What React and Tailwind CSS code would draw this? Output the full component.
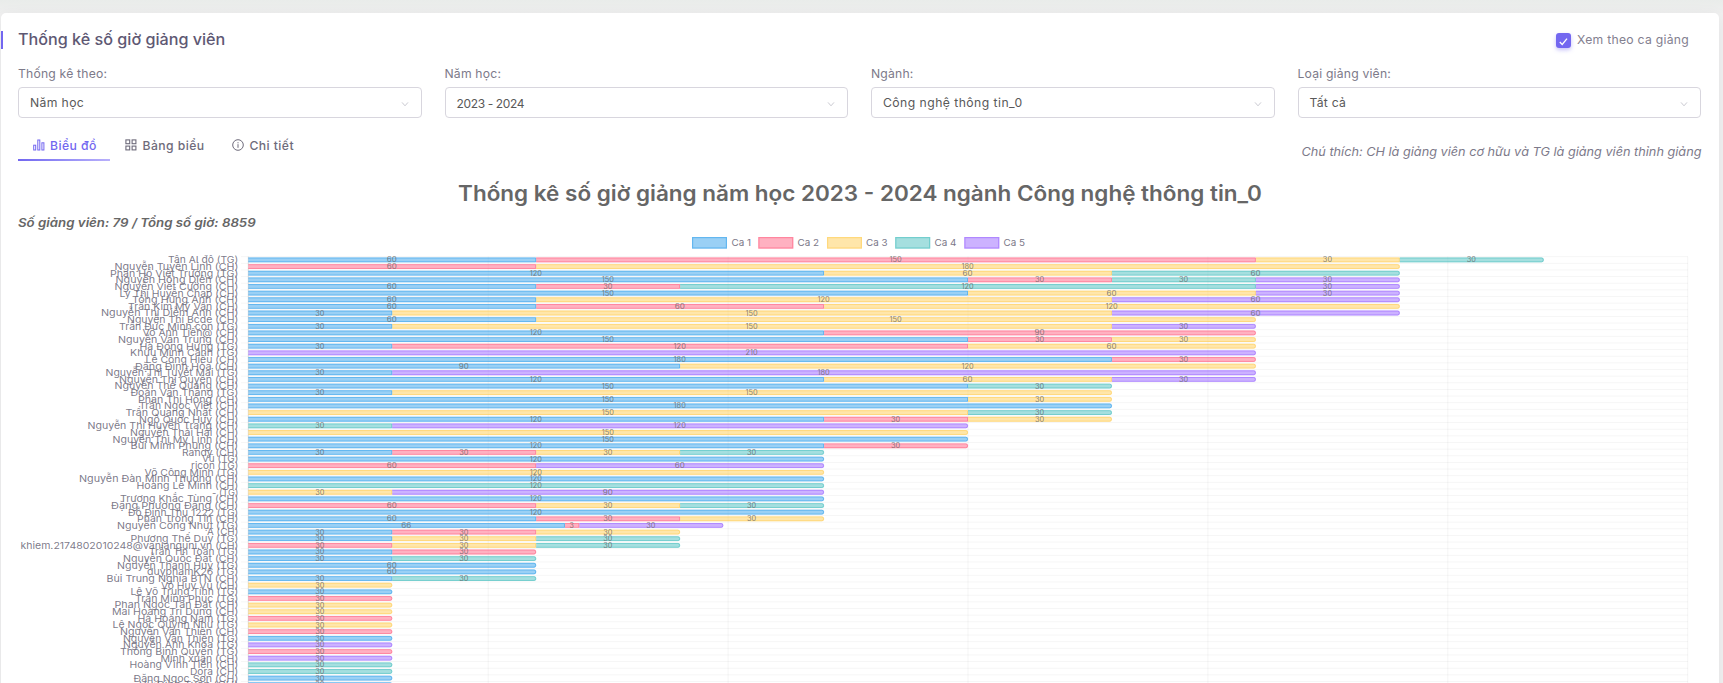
import React from "react";

const SHIFTS = [
  { name: "Ca 1", color: "#36a2eb", x: 692, textX: 731.5, textW: 19.5 },
  { name: "Ca 2", color: "#ff6384", x: 758.3, textX: 797.5, textW: 21.5 },
  { name: "Ca 3", color: "#ffcd56", x: 827, textX: 866, textW: 21.5 },
  { name: "Ca 4", color: "#4bc0c0", x: 895.2, textX: 934.5, textW: 22 },
  { name: "Ca 5", color: "#9966ff", x: 964.3, textX: 1003.5, textW: 21.5 },
];

// [lecturer, left edge of the tick label, [[shift, hours], ...]]
const ROWS = [
  ["Tân AI đô (TG)", 168, [[1, 60], [2, 150], [3, 30], [4, 30]]],
  ["Nguyễn Tuyên Linh (CH)", 114.5, [[2, 60], [3, 180]]],
  ["Phan Hồ Viết Trường (TG)", 110, [[1, 120], [3, 60], [4, 60]]],
  ["Nguyễn Hồng Diên (CH)", 115.5, [[1, 150], [2, 30], [4, 30], [5, 30]]],
  ["Nguyễn Viết Cường (CH)", 114.5, [[1, 60], [2, 30], [4, 120], [5, 30]]],
  ["Lý Thị Huyền Chap (CH)", 119.5, [[1, 150], [3, 60], [5, 30]]],
  ["Tống Hùng Anh (CH)", 132, [[1, 60], [3, 120], [5, 60]]],
  ["Trần Kim Mỹ Vân (CH)", 128, [[1, 60], [2, 60], [3, 120]]],
  ["Nguyễn Thị Diễm Anh (CH)", 101, [[1, 30], [3, 150], [5, 60]]],
  ["Nguyễn Thị Bcde (CH)", 127, [[1, 60], [3, 150]]],
  ["Trần Đức Minh con (TG)", 119, [[1, 30], [3, 150], [5, 30]]],
  ["Võ Anh Tiến@ (CH)", 142.5, [[1, 120], [2, 90]]],
  ["Nguyễn Văn Trung (CH)", 118, [[1, 150], [2, 30], [3, 30]]],
  ["Hà Đông Hưng (TG)", 139.5, [[1, 30], [2, 120], [3, 60]]],
  ["Khưu Minh Cảnh (TG)", 130, [[5, 210]]],
  ["Lê Công Hiếu (CH)", 145.5, [[1, 180], [2, 30]]],
  ["Đặng Đình Hòa (CH)", 135, [[1, 90], [3, 120]]],
  ["Nguyễn Thị Tuyết Mai (TG)", 105.5, [[1, 30], [5, 180]]],
  ["Nguyễn Thị Quyên (CH)", 119, [[1, 120], [3, 60], [5, 30]]],
  ["Nguyễn Thế Quang (CH)", 114.5, [[1, 150], [4, 30]]],
  ["Đoàn Văn Thắng (TG)", 130.5, [[1, 30], [3, 150]]],
  ["Phan Thị Hồng (CH)", 138, [[1, 150], [3, 30]]],
  ["Trần Ngọc Việt (CH)", 139, [[1, 180]]],
  ["Trần Quang Nhật (CH)", 125.5, [[3, 150], [4, 30]]],
  ["Ngô Quốc Huy (CH)", 139, [[1, 120], [2, 30], [3, 30]]],
  ["Nguyễn Thị Huyền Trang (CH)", 87.5, [[4, 30], [5, 120]]],
  ["Nguyễn Thái Hải (CH)", 130, [[3, 150]]],
  ["Nguyễn Thị Mỹ Linh (CH)", 112.5, [[1, 150]]],
  ["Bùi Minh Phụng (CH)", 130.5, [[1, 120], [2, 30]]],
  ["Randy (CH)", 182, [[1, 30], [2, 30], [3, 30], [4, 30]]],
  ["Vũ (TG)", 202, [[1, 120]]],
  ["ricon (TG)", 191, [[2, 60], [5, 60]]],
  ["Võ Công Minh (TG)", 144.5, [[3, 120]]],
  ["Nguyễn Đàn Minh Thương (CH)", 79, [[1, 120]]],
  ["Hoàng Lê Minh (CH)", 136.5, [[4, 120]]],
  ["- (TG)", 212, [[3, 30], [5, 90]]],
  ["Trương Khắc Tùng (CH)", 120, [[1, 120]]],
  ["Đặng Phương Đăng (CH)", 111, [[2, 60], [3, 30], [4, 30]]],
  ["Đỗ Đình Thu 1222 (TG)", 128, [[1, 120]]],
  ["Phan Trọng Tín (CH)", 137, [[1, 60], [2, 30], [3, 30]]],
  ["Nguyễn Công Nhựt (TG)", 117, [[1, 66], [2, 3], [5, 30]]],
  ["A (CH)", 207, [[1, 30], [2, 30], [3, 30]]],
  ["Phương Thế Duy (TG)", 130.5, [[1, 30], [3, 30], [4, 30]]],
  ["khiem.2174802010248@vanlanguni.vn (CH)", 20.5, [[2, 30], [3, 30], [4, 30]]],
  ["Trần Tín Toàn (TG)", 149, [[1, 30], [2, 30]]],
  ["Nguyễn Quốc Đạt (CH)", 123, [[1, 30], [4, 30]]],
  ["Nguyễn Thanh Huy (TG)", 117, [[1, 60]]],
  ["duyphamK26 (TG)", 147, [[1, 60]]],
  ["Bùi Trung Nghĩa BTN (CH)", 106.5, [[1, 30], [4, 30]]],
  ["Võ Huy Vũ (CH)", 161, [[3, 30]]],
  ["Lê Võ Trung Tính (TG)", 130.5, [[1, 30]]],
  ["Trần Minh Phúc (TG)", 135, [[2, 30]]],
  ["Phan Ngọc Tấn Đạt (CH)", 114.5, [[3, 30]]],
  ["Mai Hoàng Trí Dũng (CH)", 112, [[3, 30]]],
  ["Hà Hoàng Nam (TG)", 137.5, [[2, 30]]],
  ["Lê Ngọc Quỳnh Như (TG)", 112.5, [[3, 30]]],
  ["Nguyễn Văn Thiên (CH)", 120, [[2, 30]]],
  ["Nguyễn Văn Thiện (TG)", 123, [[1, 30]]],
  ["Nguyễn Ánh Khoa (TG)", 123, [[5, 30]]],
  ["Thống Bình Quyền (TG)", 120, [[2, 30]]],
  ["Minh xuân (CH)", 160.5, [[5, 30]]],
  ["Hoàng Vĩnh Tiến (CH)", 129.5, [[4, 30]]],
  ["Dora (CH)", 190, [[4, 30]]],
  ["Đặng Ngọc Sơn (CH)", 133.5, [[1, 30]]],
  ["Vũ Đình Tuấn (CH)", 139, [[1, 30]]],
];

const X0 = 248.3;
const UNIT = 4.798;
const TOP = 23.6;
const PITCH = 6.638;
const BAR = 4.8;
const LABEL_RIGHT = 238.3;

function Bar({ x, y, w, color, last }) {
  const r = last ? 1.8 : 0;
  const t = y - BAR / 2;
  const b = y + BAR / 2;
  const e = x + w;
  const fill = `M${x} ${t}H${e - r}Q${e} ${t} ${e} ${t + r}V${b - r}Q${e} ${b} ${e - r} ${b}H${x}Z`;
  const edge = `M${x} ${t + 0.5}H${e - 0.5 - r}Q${e - 0.5} ${t + 0.5} ${e - 0.5} ${t + 0.5 + r}V${b - 0.5 - r}Q${e - 0.5} ${b - 0.5} ${e - 0.5 - r} ${b - 0.5}H${x}`;
  return (
    <g>
      <path d={fill} fill={color} fillOpacity="0.5" />
      <path d={edge} fill="none" stroke={color} strokeOpacity="0.6" strokeWidth="0.9" />
    </g>
  );
}

function Chart() {
  return (
    <svg
      className="block h-[450px] w-[1718px] shrink-0"
      viewBox="1 0 1718 450"
      fontFamily="Inter, sans-serif"
    >
      {SHIFTS.map((s) => (
        <g key={s.name}>
          <rect x={s.x} y="4" width="35" height="11.6" fill={s.color} fillOpacity="0.5" />
          <rect x={s.x + 0.6} y="4.6" width="33.8" height="10.4" fill="none" stroke={s.color} strokeOpacity="0.55" strokeWidth="1.2" />
          <text x={s.textX} y="13.2" fontSize="9.4" fill="#7b7888" textLength={s.textW} lengthAdjust="spacingAndGlyphs">{s.name}</text>
        </g>
      ))}
      {ROWS.map((_, i) => (
        <rect key={i} x="241" y={TOP - 0.4 + i * PITCH} width="1447" height="0.9" fill="#000" fillOpacity="0.045" />
      ))}
      {[0, 50, 100, 150, 200, 250, 300].map((v) => (
        <rect key={v} x={X0 - 0.5 + v * UNIT} y={TOP} width="1" height="430" fill="#000" fillOpacity={v === 0 ? 0.12 : 0.045} />
      ))}
      {ROWS.map(([name, left, parts], i) => {
        const y = TOP + PITCH * (i + 0.5);
        let sum = 0;
        return (
          <g key={name}>
            {parts.map(([s, v], j) => {
              const x = X0 + sum * UNIT;
              sum += v;
              return <Bar key={s} x={x} y={y} w={v * UNIT} color={SHIFTS[s - 1].color} last={j === parts.length - 1} />;
            })}
            <text x={left} y={y + 3.4} fontSize="9.4" fill="#6e6b7b" fillOpacity="0.9" textLength={LABEL_RIGHT - left} lengthAdjust="spacingAndGlyphs">{name}</text>
          </g>
        );
      })}
      {ROWS.map(([name, , parts], i) => {
        const y = TOP + PITCH * (i + 0.5);
        let sum = 0;
        return parts.map(([s, v]) => {
          const cx = X0 + (sum + v / 2) * UNIT - 0.4;
          sum += v;
          const w = v < 10 ? 4.3 : v < 60 ? 9.2 : v < 100 ? 10 : 12.2;
          return (
            <text key={name + s} x={cx - w / 2} y={y + 2.5} fontSize="7" fill="#666" fillOpacity="0.8" textLength={w} lengthAdjust="spacingAndGlyphs">{v}</text>
          );
        });
      })}
    </svg>
  );
}

function Field({ label, value, valueClass }) {
  return (
    <div className="flex min-w-0 flex-1 flex-col">
      <div className="h-[20px] text-[12.2px] leading-[20px] tracking-[0.015em] text-[#7d7a8a]">{label}</div>
      <div className="mt-[3px] flex h-[31px] items-center justify-between rounded-[4px] border border-[#d8d6de] pr-[12px] pl-[11px]">
        <span className={`mt-[2px] text-[#595959] ${valueClass}`}>{value}</span>
        <svg width="8" height="8" viewBox="0 0 8 8" fill="none" stroke="#c4c4cc" strokeWidth="0.9" className="mt-[3px]">
          <path d="M1 2.4 4 5.8 7 2.4" />
        </svg>
      </div>
    </div>
  );
}

function BarsIcon() {
  return (
    <svg width="12" height="12" viewBox="0 0 12 12" fill="none" stroke="currentColor" strokeWidth="1">
      <rect x="0.7" y="6.2" width="2" height="4.8" />
      <rect x="4.8" y="1" width="2" height="10" />
      <rect x="8.9" y="3.8" width="2" height="7.2" />
    </svg>
  );
}

function GridIcon() {
  return (
    <svg width="12" height="12" viewBox="0 0 12 12" fill="none" stroke="currentColor" strokeWidth="1.1">
      <rect x="0.9" y="0.9" width="3.8" height="3.8" />
      <rect x="7.1" y="0.9" width="3.8" height="3.8" />
      <rect x="0.9" y="7.1" width="3.8" height="3.8" />
      <rect x="7.1" y="7.1" width="3.8" height="3.8" />
    </svg>
  );
}

function InfoIcon() {
  return (
    <svg width="12" height="12" viewBox="0 0 12 12" fill="none" stroke="currentColor" strokeWidth="1">
      <circle cx="6" cy="6" r="5.3" />
      <path d="M6 5.2V8.8M6 3.2V4.3" />
    </svg>
  );
}

export default function App() {
  return (
    <div className="h-[683px] w-full overflow-hidden bg-[#f0f0f0] font-[Inter,sans-serif] text-[#6e6b7b]">
      <div className="h-[13px] bg-linear-to-b from-[#e9ecea] to-[#efefef]" />
      <div className="ml-px flex h-[760px] w-[1718px] flex-col rounded-[5px] bg-white shadow-[0_3px_16px_rgba(34,41,47,0.06)]">
        <div className="mt-[18px] flex h-[18px] items-center justify-between border-l-2 border-[#7367f0] pr-[30px] pl-[15px]">
          <h4 className="origin-left scale-x-[1.05] text-[15.4px] leading-[18px] font-[450] whitespace-nowrap text-[#5e5873]">Thống kê số giờ giảng viên</h4>
          <label className="flex items-center gap-[5.5px]">
            <span className="mt-px flex size-[15px] items-center justify-center rounded-[3px] bg-[#7367f0] shadow-[0_2px_4px_rgba(115,103,240,0.4)]">
              <svg width="9" height="9" viewBox="0 0 9 9" fill="none" stroke="#fff" strokeWidth="1.3" className="mt-px">
                <path d="M0.8 5 3.2 7.5 8 1.6" />
              </svg>
            </span>
            <span className="-mt-px text-[12.2px] leading-[18px] tracking-[0.022em] whitespace-nowrap text-[#83808f]">Xem theo ca giảng</span>
          </label>
        </div>

        <div className="mt-[15px] flex gap-[23px] pr-[18px] pl-[17px]">
          <Field label="Thống kê theo:" value="Năm học" valueClass="text-[12.2px] tracking-[0.03em]" />
          <Field label="Năm học:" value="2023 - 2024" valueClass="text-[12px] tracking-[-0.03em]" />
          <Field label="Ngành:" value="Công nghệ thông tin_0" valueClass="text-[12.2px] tracking-[0.037em]" />
          <Field label="Loại giảng viên:" value="Tất cả" valueClass="text-[12.2px] tracking-[0.02em]" />
        </div>

        <div className="flex h-[43px] items-end justify-between pr-[18px] pl-[17px]">
          <div className="flex h-[30px] text-[12.2px] leading-[28px] font-medium tracking-[0.035em] whitespace-nowrap">
            <div className="flex h-[30px] w-[92px] flex-col text-[#7367f0]">
              <div className="flex h-[28px] items-center gap-[5px] pl-[15px]">
                <BarsIcon />
                <span className="mt-px leading-[12px]">Biểu đồ</span>
              </div>
              <div className="h-[2px] bg-linear-to-r from-[#7367f0] to-[#b9b0fb]" />
            </div>
            <div className="flex h-[28px] w-[107px] items-center gap-[6px] pl-[14.5px]">
              <GridIcon />
              <span className="mt-px leading-[12px]">Bảng biểu</span>
            </div>
            <div className="flex h-[28px] items-center gap-[5.5px] pl-[15px]">
              <InfoIcon />
              <span className="mt-px leading-[12px]">Chi tiết</span>
            </div>
          </div>
          <div className="origin-right scale-x-[1.043] text-[12.2px] leading-[18px] whitespace-nowrap text-[#7d7a8a] italic">
            Chú thích: CH là giảng viên cơ hữu và TG là giảng viên thỉnh giảng
          </div>
        </div>

        <h3 className="mt-[17px] scale-x-[1.07] pt-px text-center text-[21px] leading-[29px] font-semibold whitespace-nowrap text-[#666]">
          Thống kê số giờ giảng năm học 2023 - 2024 ngành Công nghệ thông tin_0
        </h3>
        <div className="mt-[5px] h-[20px] pl-[17px] text-[12.2px] leading-[19px] font-semibold whitespace-nowrap text-[#666] italic">
          <span className="inline-block origin-left scale-x-[1.088]">Số giảng viên: 79 / Tổng số giờ: 8859</span>
        </div>
        <Chart />
      </div>
    </div>
  );
}
